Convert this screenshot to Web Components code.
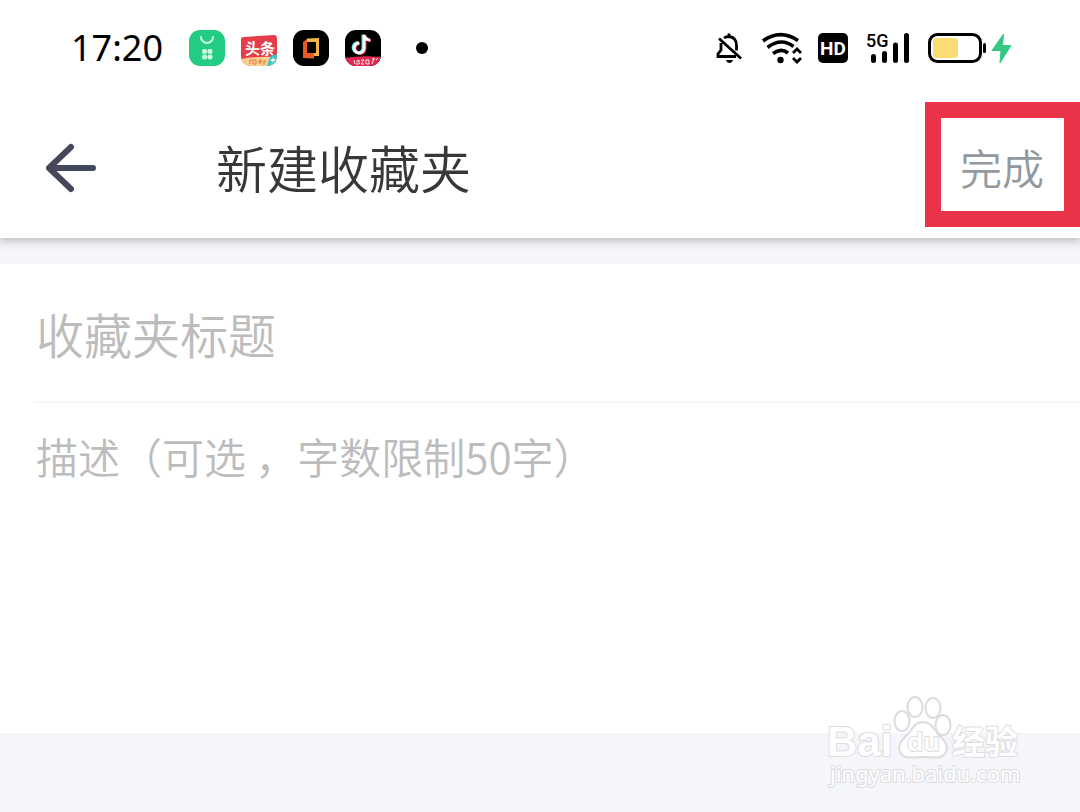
<!DOCTYPE html>
<html lang="zh-CN">
<head>
<meta charset="utf-8">
<meta name="viewport" content="width=device-width, initial-scale=1">
<title>新建收藏夹</title>
<style>
  body { margin: 0; background: #f5f6fa; font-family: "Noto Sans CJK SC", sans-serif; font-weight: 350; color: #38383a; }
</style>
</head>
<body>
<favorites-page></favorites-page>

<template id="status-bar">
  <style>
    :host { display: flex; align-items: center; justify-content: space-between; height: 96px; padding: 0 68px 0 71px; box-sizing: border-box; color: #000; }
    div { display: flex; align-items: center; }
    .apps { gap: 16px; }
    time { font: 400 36px/48px "Noto Sans", sans-serif; margin-right: 10px; }
    svg { display: block; flex: none; }
    .dot { margin-left: 18px; }
    .state { gap: 16px; }
    .network { margin-left: 2px; }
  </style>
  <div class="apps">
    <time datetime="17:20">17:20</time>
    <svg width="36" height="36" viewBox="0 0 36 36" aria-label="应用商店"><rect width="36" height="36" rx="11" fill="#22cc80"/><path d="M12 7a6 6 0 0 0 12 0" fill="none" stroke="#c9ffe2" stroke-width="2" stroke-linecap="round"/><g fill="#c9ffe2"><rect x="13" y="19" width="5" height="5" rx="2"/><rect x="18.500" y="19" width="5" height="5" rx="2"/><rect x="13" y="24.500" width="5" height="5" rx="2"/><rect x="18.500" y="24.500" width="5" height="5" rx="2"/></g></svg>
    <svg width="36" height="36" viewBox="0 0 36 36" aria-label="头条"><defs><clipPath id="t"><path d="M0 9 Q0 7 3 7L33 5Q36 5 36 9V25Q36 36 25 36H11Q0 36 0 25Z"/></clipPath></defs><g clip-path="url(#t)"><rect width="36" height="36" fill="#e53e4b"/><path d="M0 29 Q15 26 36 27V36H0Z" fill="#fbd08c"/><path d="M29 27 36 24V36H26Z" fill="#36c8c5"/><path d="m33 27-4 4h3l-2 3 5-5h-3z" fill="#fff"/><path d="M9 30v4M8 30h3M12 30h3v4h-3zM18 30h3M17 32h4M19 30v4M24 30l-2 2h3M23 32v3" fill="none" stroke="#e77b4f" stroke-width="1"/></g><text x="4" y="24" font-family="Noto Sans CJK SC" font-size="15" font-weight="700" fill="#fff">头条</text></svg>
    <svg width="36" height="36" viewBox="0 0 36 36" aria-label="应用"><rect width="36" height="36" rx="11" fill="#000"/><path d="M14 8.500 26 8v18h-6v-3h3V12h-9z" fill="#f4b649"/><path d="M10 12 14 9v14h7v5.500L10 28z" fill="#ea5a27"/></svg>
    <svg width="36" height="36" viewBox="0 0 36 36" aria-label="抖音"><defs><clipPath id="d"><rect width="36" height="36" rx="11"/></clipPath></defs><g clip-path="url(#d)"><rect width="36" height="36" fill="#000"/><g fill="none" stroke-width="3"><path d="M18 4.500v12.500a5 5 0 1 1-5-4.500M18 4.500q1 5 6 5" stroke="#38d6d1"/><path d="M20 5.500v12.500a5 5 0 1 1-5-4.500M20 5.500q1 5 6 5" stroke="#eb3b62"/><path d="M19 5v12.500a5 5 0 1 1-5-4.500M19 5q1 5 6 5" stroke="#fff"/></g><path d="M0 28Q16 25 36 27V36H0Z" fill="#df2854"/><path d="M9 30l1 4M11 32l3-2v4h-3M16 30h3l-3 4h3M21 30v4h3v-4zM27 29h3M29 28l-2 6M31 30l2-2" fill="none" stroke="#ffe9e6" stroke-width="1"/></g></svg>
    <svg class="dot" width="14" height="14" viewBox="0 0 14 14"><circle cx="7" cy="7" r="6" fill="#000"/></svg>
  </div>
  <div class="state">
    <svg width="30" height="32" viewBox="0 0 30 32" aria-label="静音" fill="none" stroke="#000" stroke-width="2.800"><path d="M10 6Q12 4.500 15 4.500q7.500 1 7.500 9v5M15 1.500v3M7 11V18L4 22v2.500H22M5 6.500 27 26.500"/><path d="M12 28h7q-1 3-3.500 3t-3.500-3z" fill="#000" stroke="none"/></svg>
    <svg width="42" height="32" viewBox="-1 0 42 32" aria-label="Wi-Fi" fill="none" stroke="#000" stroke-width="3.600"><path d="M2 9Q19-3.500 37 8.500M6.500 15.500Q20 5 32.500 14.500M12 21.500Q20 15.500 27 21"/><circle cx="19.500" cy="28" r="3.200" fill="#000" stroke="none"/><path d="m32 21 4-4 4 4M32 26l4 4 4-4" stroke-width="2.800"/></svg>
    <svg width="30" height="30" viewBox="0 0 30 30" aria-label="HD"><rect width="30" height="30" rx="5"/><text x="15" y="22" text-anchor="middle" font-family="Roboto" font-size="19" font-weight="700" fill="#fff">HD</text></svg>
    <svg class="network" width="46" height="32" viewBox="0 0 46 32" aria-label="5G"><text x="0" y="15" font-family="Roboto" font-size="18" font-weight="500">5G</text><path d="M7.500 24.500v4M18.500 21.500v7M29.500 13v15.500M40.500 3.500v25" stroke="#000" stroke-width="5" stroke-linecap="round"/></svg>
    <svg width="84" height="32" viewBox="0 0 84 32" aria-label="充电中"><rect x="1.500" y="2.500" width="51" height="27" rx="8" fill="#fff" stroke="#000" stroke-width="3"/><rect x="5" y="6" width="25" height="20" rx="4" fill="#fbdc74"/><rect x="55" y="11" width="3" height="10" rx="1.500"/><path d="M75.500 2 64 18.500h9L72 31l11-17.500h-8.500z" fill="#33ca80" stroke="#33ca80" stroke-width="1" stroke-linejoin="round"/></svg>
  </div>
</template>

<template id="app-bar">
  <style>
    :host { display: grid; grid-template-columns: 216px 1fr auto; align-items: center; height: 142px; position: relative; }
    button { font: inherit; background: none; border: 0; padding: 0; margin: 0; height: 100%; cursor: pointer; }
    .back { padding-left: 44px; text-align: left; }
    svg { display: block; }
    h1 { margin: 0; font-size: 51px; line-height: 76px; font-weight: inherit; }
    .done { font-size: 42px; line-height: 62px; color: #92999f; padding: 0 36px; }
    .mark { position: absolute; top: 6px; right: 0; bottom: 11px; width: 155px; box-sizing: border-box; border: 16px solid #ea3348; pointer-events: none; }
  </style>
  <button class="back" aria-label="返回"><svg width="54" height="52" viewBox="0 0 54 52" fill="none" stroke="#454858" stroke-width="6" stroke-linecap="round" stroke-linejoin="round"><path d="M27 6 5 27 27 48M5 27H49"/></svg></button>
  <h1><slot></slot></h1>
  <button class="done">完成</button>
  <span class="mark"></span>
</template>

<template id="favorites-form">
  <style>
    :host { display: flex; flex-direction: column; background: #fff; }
    input, textarea { display: block; box-sizing: border-box; width: 100%; border: 0; outline: 0; margin: 0; background: none; font: inherit; color: #38383a; resize: none; }
    input { height: 137px; padding: 0 36px 0 2px; font-size: 48px; }
    textarea { height: 330px; padding: 22px 36px; font-size: 42px; line-height: 62px; overflow: hidden; }
    .title { margin-left: 34px; border-bottom: 2px solid #f6f6f6; }
    ::placeholder { color: #bcbcbc; opacity: 1; }
  </style>
  <div class="title"><input type="text" aria-label="收藏夹标题" placeholder="收藏夹标题"></div>
  <textarea aria-label="描述" placeholder="描述（可选 ，字数限制50字）"></textarea>
</template>

<template id="site-watermark">
  <style>:host { display: block; } svg { display: block; overflow: visible; } text { paint-order: stroke; }</style>
  <svg width="204" height="96" viewBox="0 0 204 96" fill="#fff" stroke="#dbdcdf" stroke-width="2" stroke-linejoin="round">
    <text x="4" y="62" font-family="Liberation Sans" font-weight="700" font-size="42">Bai</text>
    <ellipse cx="79" cy="27" rx="7.500" ry="10"/><ellipse cx="92" cy="13" rx="7.500" ry="10"/><ellipse cx="110" cy="14" rx="7.500" ry="10"/><ellipse cx="120" cy="31" rx="7.500" ry="10"/>
    <path d="M100 28C108 28 110 34 115 40C121 46 126 51 123 58C119 66 110 63 100 63S81 66 77 58C74 51 79 46 85 40C90 34 92 28 100 28Z"/>
    <text x="84" y="57" font-family="Noto Sans" font-weight="600" font-size="26">du</text>
    <text x="129" y="60" font-family="Noto Sans CJK SC" font-weight="700" font-size="33">经验</text>
    <text x="7" y="88" font-family="Noto Sans" font-weight="400" font-size="22">jingyan.baidu.com</text>
  </svg>
</template>

<template id="favorites-page">
  <style>
    :host { display: block; position: relative; min-height: 100vh; overflow: hidden; }
    header { position: relative; background: #fff; box-shadow: 0 0 10px 2px rgba(0,0,0,.28); margin-bottom: 26px; }
    site-watermark { position: absolute; right: 53px; bottom: 22px; pointer-events: none; }
  </style>
  <header><status-bar></status-bar><app-bar>新建收藏夹</app-bar></header>
  <main><favorites-form></favorites-form></main>
  <site-watermark></site-watermark>
</template>

<script>
  class TemplateElement extends HTMLElement {
    constructor() {
      super();
      const template = document.getElementById(this.localName);
      this.attachShadow({ mode: "open" }).append(template.content.cloneNode(true));
    }
  }
  for (const name of ["status-bar", "app-bar", "favorites-form", "site-watermark", "favorites-page"]) {
    customElements.define(name, class extends TemplateElement {});
  }
</script>
</body>
</html>
